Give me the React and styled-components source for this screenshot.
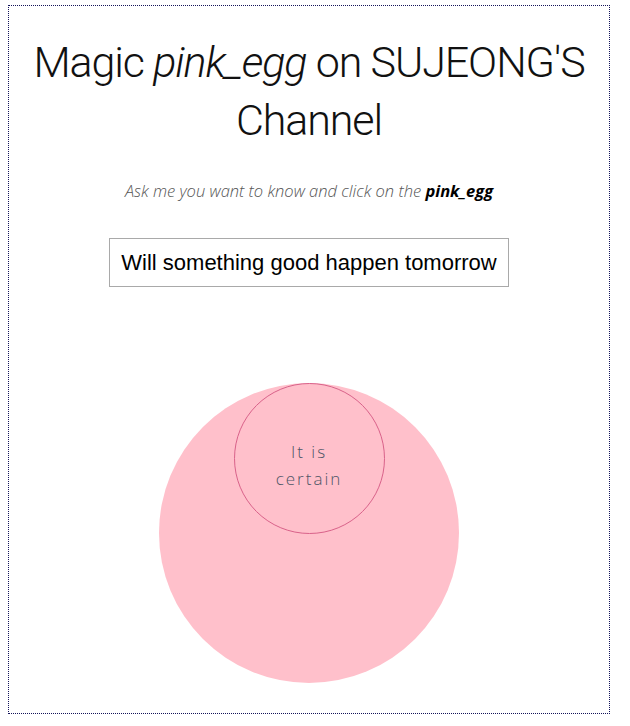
import React, { useState } from "react";
import styled, { createGlobalStyle } from "styled-components";

const Global = createGlobalStyle`
  html, body { margin: 0; padding: 0; background: #fff; }
  body { font-family: "Open Sans", "Liberation Sans", sans-serif; }
`;

const Frame = styled.div`
  box-sizing: border-box;
  width: 602px;
  height: 709px;
  margin: 5px 0 0 8px;
  border: 1px dotted #14145a;
  display: flex;
  flex-direction: column;
  align-items: center;
  padding-top: 27px;
`;

const Title = styled.h1`
  margin: 0;
  font-family: Roboto, Lato, sans-serif;
  font-weight: 300;
  font-size: 43px;
  line-height: 58px;
  letter-spacing: -1.1px;
  color: #111;
  text-align: center;
  white-space: nowrap;
  em { font-style: italic; }
`;

const Hint = styled.p`
  margin: 30px 0 0;
  font-family: "Open Sans", sans-serif;
  font-style: italic;
  font-weight: 300;
  font-size: 16.5px;
  line-height: 24px;
  color: #555;
  b { font-weight: 700; color: #000; }
`;

const Question = styled.input`
  box-sizing: border-box;
  margin-top: 35px;
  width: 400px;
  height: 49px;
  border: 1px solid #a9a9a9;
  padding: 0 10px;
  font-family: "Liberation Sans", Arial, sans-serif;
  font-size: 22px;
  color: #000;
  text-align: center;
  outline: none;
`;

const Egg = styled.div`
  margin-top: 96px;
  width: 300px;
  height: 300px;
  border-radius: 50%;
  background: pink;
  display: flex;
  justify-content: center;
  cursor: pointer;
`;

const Window = styled.div`
  box-sizing: border-box;
  width: 151px;
  height: 151px;
  border-radius: 50%;
  border: 1px solid #d9628a;
  display: flex;
  align-items: center;
  justify-content: center;
  padding-top: 12px;
  text-align: center;
  font-family: "Open Sans", sans-serif;
  font-weight: 300;
  font-size: 17px;
  line-height: 27px;
  letter-spacing: 2px;
  color: #4d5566;
`;

export default function App() {
  const [q, setQ] = useState("Will something good happen tomorrow");
  return (
    <>
      <Global />
      <Frame>
        <Title>
          Magic <em>pink_egg</em> on SUJEONG'S
          <br />
          Channel
        </Title>
        <Hint>
          Ask me you want to know and click on the <b>pink_egg</b>
        </Hint>
        <Question value={q} onChange={(e) => setQ(e.target.value)} />
        <Egg>
          <Window>
            It is
            <br />
            certain
          </Window>
        </Egg>
      </Frame>
    </>
  );
}
